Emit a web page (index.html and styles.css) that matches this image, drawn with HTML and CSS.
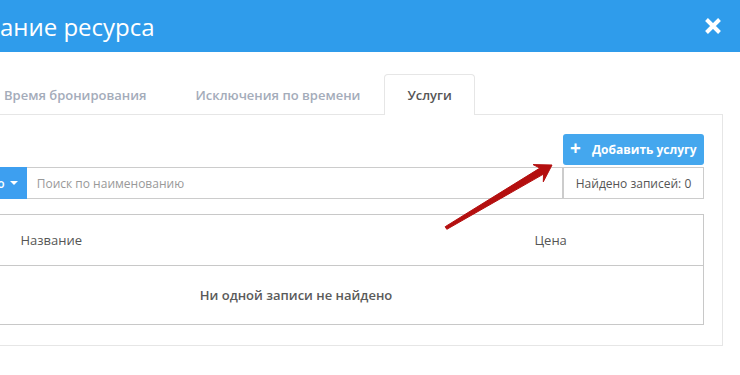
FILE: index.html
```html
<!DOCTYPE html>
<html lang="ru">
<head>
  <meta charset="UTF-8" />
  <meta name="viewport" content="width=device-width, initial-scale=1.0" />
  <title>Редактирование ресурса</title>
  <link rel="stylesheet" href="styles.css">
</head>
<body>
  <div class="modal">
    <div class="modal-header">
      <h4 class="modal-title">Редактирование ресурса</h4>
      <button class="close" aria-label="Закрыть">
        <svg width="18" height="18" viewBox="0 0 18 18">
          <path d="M2.5 2.5 L15.5 15.5 M15.5 2.5 L2.5 15.5" stroke="#fff" stroke-width="4" />
        </svg>
      </button>
    </div>

    <div class="modal-body">
      <ul class="tabs">
        <li class="tab">Время бронирования</li>
        <li class="tab">Исключения по времени</li>
        <li class="tab active">Услуги</li>
      </ul>

      <div class="tab-pane">
        <div class="toolbar">
          <button class="btn-add"><span class="plus">+</span> Добавить услугу</button>
        </div>

        <div class="search-row">
          <button class="btn-filter">Искать по <span class="caret"></span></button>
          <input type="text" class="search-input" placeholder="Поиск по наименованию" />
          <div class="counter">Найдено записей: 0</div>
        </div>

        <table class="grid">
          <thead>
            <tr>
              <th class="col-check"></th>
              <th class="col-name">Название</th>
              <th class="col-price">Цена</th>
            </tr>
          </thead>
          <tbody>
            <tr>
              <td class="empty" colspan="3">Ни одной записи не найдено</td>
            </tr>
          </tbody>
        </table>
      </div>
    </div>
  </div>

  <!-- red pointer drawn over the screenshot -->
  <svg class="pointer" viewBox="0 0 740 375" width="740" height="375">
    <path d="M445.2 226.7 L539.9 168.1 L533.1 164.6 L552 165 L543.3 181.8 L543.5 174.1 L446.8 229.3 Z"
          fill="#b40f0f" stroke="#b40f0f" stroke-width="1" stroke-linejoin="round" />
  </svg>
</body>
</html>
```

FILE: styles.css
```css
* {
  margin: 0;
  padding: 0;
  box-sizing: border-box;
  font-family: 'Open Sans', 'Noto Sans', sans-serif;
}

body {
  width: 740px;
  height: 375px;
  overflow: hidden;
  background: #fff;
  color: #555;
  position: relative;
}

.modal-header {
  height: 52px;
  background: #2f9ceb;
  display: flex;
  align-items: center;
  justify-content: space-between;
  padding-right: 18px;
}

.modal-title {
  font-size: 24px;
  font-weight: 400;
  color: #fff;
  margin-left: -137px;
  white-space: nowrap;
}

.close {
  background: none;
  border: none;
  width: 18px;
  height: 18px;
  display: flex;
}

.modal-body {
  margin-left: -132px;
  padding: 22px 17px 0 0;
}

.tabs {
  list-style: none;
  display: flex;
  border-bottom: 1px solid #e6e6e6;
  padding-left: 111px;
}

.tab {
  height: 40px;
  line-height: 40px;
  padding: 0 23px 0 24px;
  font-size: 13px;
  font-weight: 600;
  color: #a4acba;
  border: 1px solid transparent;
  border-bottom: none;
  margin-bottom: -1px;
}

.tab.active {
  color: #555;
  background: #fff;
  border-color: #e6e6e6;
  border-radius: 4px 4px 0 0;
  height: 41px;
  padding: 0 22px;
}

.tab-pane {
  border: 1px solid #e6e6e6;
  border-top: none;
  padding: 19px 18px 20px 19px;
}

.toolbar {
  display: flex;
  justify-content: flex-end;
  margin-bottom: 2px;
}

.btn-add {
  width: 141px;
  height: 31px;
  background: #44a7ee;
  border: none;
  border-radius: 3px;
  color: #fff;
  font-size: 12px;
  font-weight: 700;
  display: flex;
  align-items: center;
  padding-left: 7px;
  gap: 11px;
}

.btn-add .plus {
  font-size: 19px;
  font-weight: 700;
  line-height: 1;
  margin-top: -2px;
}

.search-row {
  display: flex;
  height: 32px;
  margin-bottom: 15px;
}

.btn-filter {
  margin-left: 44px;
  background: #3d9ff0;
  border: none;
  color: #fff;
  font-size: 12px;
  font-weight: 600;
  padding: 0 9px 0 12px;
  display: flex;
  align-items: center;
  gap: 5px;
  white-space: nowrap;
}

.caret {
  width: 0;
  height: 0;
  border-left: 4px solid transparent;
  border-right: 4px solid transparent;
  border-top: 4px solid #fff;
}

.search-input {
  flex: 1;
  border: 1px solid #ccc;
  border-left: none;
  padding: 0 10px;
  font-size: 12px;
  color: #555;
  outline: none;
}

.search-input::placeholder {
  color: #999;
}

.counter {
  width: 141px;
  border: 1px solid #ccc;
  font-size: 12px;
  color: #555;
  display: flex;
  align-items: center;
  justify-content: center;
}

.grid {
  width: 100%;
  border-collapse: collapse;
  border: 1px solid #c8c8c8;
}

.grid th {
  height: 51px;
  text-align: left;
  font-size: 13px;
  font-weight: 400;
  color: #555;
  border-bottom: 1px solid #c8c8c8;
}

.col-check {
  width: 112px;
}

.col-name {
  padding-left: 20px;
}

.col-price {
  width: 169px;
}

.empty {
  height: 59px;
  text-align: center;
  font-size: 13px;
  font-weight: 600;
  color: #5a5a5a;
}

.pointer {
  position: absolute;
  left: 0;
  top: 0;
  pointer-events: none;
}
```
